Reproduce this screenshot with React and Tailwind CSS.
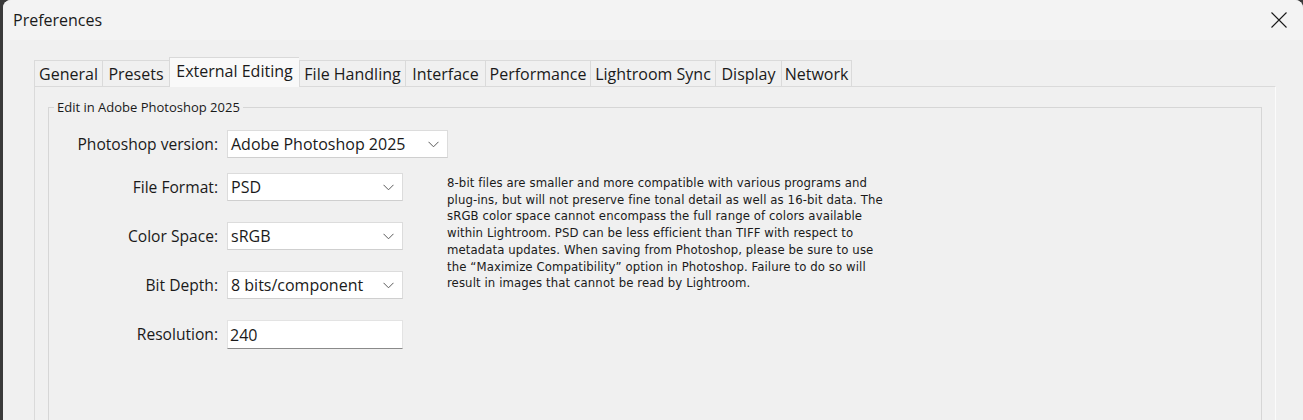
const tabs = [
  { name: "General", w: "w-[68px]" },
  { name: "Presets", w: "w-[67px]" },
  { name: "External Editing", w: "w-[130px]", active: true },
  { name: "File Handling", w: "w-[106px]" },
  { name: "Interface", w: "w-[80px]" },
  { name: "Performance", w: "w-[105px]" },
  { name: "Lightroom Sync", w: "w-[125px]" },
  { name: "Display", w: "w-[66px]" },
  { name: "Network", w: "w-[71px]" },
];

const Chevron = () => (
  <svg width="11" height="7" viewBox="0 0 11 7" className="shrink-0">
    <path d="M0.5 0.8 L5.5 5.8 L10.5 0.8" fill="none" stroke="#5a5a5a" strokeWidth="1" />
  </svg>
);

const Combo = ({ value, w }) => (
  <div
    className={`flex h-[28px] ${w} items-center justify-between border border-[#dcdcdc] border-b-[#cfcfcf] bg-white pl-[3px] pr-[8px] text-[16px] text-[#1a1a1a]`}
  >
    <span>{value}</span>
    <Chevron />
  </div>
);

const Label = ({ children, className = "" }) => (
  <div
    className={`flex h-[28px] items-center justify-end pt-[2px] text-[15.6px] text-[#1a1a1a] ${className}`}
  >
    {children}
  </div>
);

const App = () => {
  return (
    <div
      className="h-[420px] w-[1303px] overflow-hidden bg-[#3a3a3a]"
      style={{ fontFamily: '"Open Sans", "Noto Sans", sans-serif' }}
    >
      <div className="ml-[3px] h-[420px] overflow-hidden rounded-tl-[8px] rounded-tr-[8px] bg-[#f0f0f0]">
        {/* Title bar */}
        <div className="flex h-[40px] items-center justify-between bg-[#f3f3f3] pl-[10px] pr-[16px]">
          <span className="text-[16px] text-[#1a1a1a]">Preferences</span>
          <svg width="16" height="16" viewBox="0 0 16 16">
            <path d="M0.5 0.5 L15.5 15.5 M15.5 0.5 L0.5 15.5" stroke="#1a1a1a" strokeWidth="1.1" fill="none" />
          </svg>
        </div>

        {/* Tabs */}
        <div className="ml-[31px] mr-[27px] mt-[17px]">
          <div className="flex items-end">
            {tabs.map((t) =>
              t.active ? (
                <div
                  key={t.name}
                  className={`${t.w} relative z-10 -mb-px flex h-[30px] items-center justify-center border-l border-t border-[#d9d9d9] bg-[#f9f9f9] pb-[3px] text-[16px] text-[#1a1a1a]`}
                >
                  {t.name}
                </div>
              ) : (
                <div
                  key={t.name}
                  className={`${t.w} flex h-[26px] items-center justify-center border-l border-t border-[#dadada] bg-[#f0f0f0] text-[16px] text-[#1a1a1a] last:border-r`}
                >
                  {t.name}
                </div>
              )
            )}
          </div>

          {/* Tab panel */}
          <div className="h-[400px] border border-[#dadada] border-r-[#fbfbfb] bg-[#f0f0f0] px-[13px] pt-[12px]">
            <fieldset className="h-[380px] border border-[#d6d6d6] px-0 pb-0 pt-0">
              <legend className="ml-[5px] px-[3px] text-[13px] leading-[16px] text-[#1a1a1a]">
                Edit in Adobe Photoshop 2025
              </legend>

              <div className="mt-[15px] grid grid-cols-[169px_175px_auto] gap-x-[9px] gap-y-[21px]">
                <Label className="-mb-[6px]">Photoshop version:</Label>
                <div className="col-span-2 -mb-[6px]">
                  <Combo value="Adobe Photoshop 2025" w="w-[221px]" />
                </div>

                <Label>File Format:</Label>
                <Combo value="PSD" w="w-[176px]" />
                <p
                  className="row-span-4 ml-[36px] mt-[2px] whitespace-nowrap text-[13px] leading-[16.7px] tracking-[0.1px] text-[#1a1a1a]"
                  style={{ fontFamily: '"DejaVu Sans Condensed", "Liberation Sans", sans-serif' }}
                >
                  8-bit files are smaller and more compatible with various programs and
                  <br />
                  plug-ins, but will not preserve fine tonal detail as well as 16-bit data. The
                  <br />
                  sRGB color space cannot encompass the full range of colors available
                  <br />
                  within Lightroom. PSD can be less efficient than TIFF with respect to
                  <br />
                  metadata updates. When saving from Photoshop, please be sure to use
                  <br />
                  the “Maximize Compatibility” option in Photoshop. Failure to do so will
                  <br />
                  result in images that cannot be read by Lightroom.
                </p>

                <Label>Color Space:</Label>
                <Combo value="sRGB" w="w-[176px]" />

                <Label>Bit Depth:</Label>
                <Combo value="8 bits/component" w="w-[176px]" />

                <Label>Resolution:</Label>
                <div className="flex h-[29px] w-[176px] items-center border border-[#e3e3e3] border-b-[#8a8a8a] bg-white pl-[2px] text-[16px] text-[#1a1a1a]">
                  240
                </div>
              </div>
            </fieldset>
          </div>
        </div>
      </div>
    </div>
  );
};

export default App;
